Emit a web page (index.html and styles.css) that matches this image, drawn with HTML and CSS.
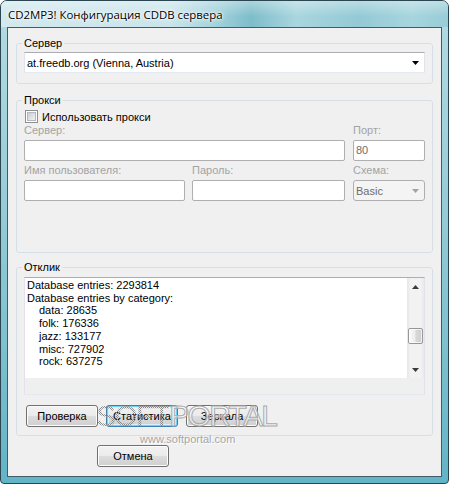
FILE: index.html
```html
<!DOCTYPE html>
<html lang="ru">
<head>
<meta charset="utf-8">
<title>CD2MP3! Конфигурация CDDB сервера</title>
<link rel="stylesheet" href="styles.css">
</head>
<body>
<div class="window">
  <div class="titlebar"><span class="title">CD2MP3! Конфигурация CDDB сервера</span></div>
  <div class="client">
    <fieldset class="group g-server">
      <legend>Сервер</legend>
      <div class="gbody">
        <div class="combo">
          <span class="combo-text">at.freedb.org (Vienna, Austria)</span>
          <svg class="arrow" width="7" height="4" viewBox="0 0 7 4"><polygon points="0,0 7,0 3.5,4" fill="#000"/></svg>
        </div>
      </div>
    </fieldset>

    <fieldset class="group g-proxy">
      <legend>Прокси</legend>
      <div class="gbody">
        <label class="check"><span class="box"></span><span>Использовать прокси</span></label>
        <div class="proxy-grid">
          <div class="lbl span2">Сервер:</div>
          <div class="lbl col3">Порт:</div>
          <div class="edit span2"></div>
          <div class="edit col3">80</div>
          <div class="lbl">Имя пользователя:</div>
          <div class="lbl">Пароль:</div>
          <div class="lbl col3">Схема:</div>
          <div class="edit"></div>
          <div class="edit"></div>
          <div class="combo dis col3">
            <span class="combo-text">Basic</span>
            <svg class="arrow" width="7" height="4" viewBox="0 0 7 4"><polygon points="0,0 7,0 3.5,4" fill="#a3a3a3"/></svg>
          </div>
        </div>
      </div>
    </fieldset>

    <fieldset class="group g-resp">
      <legend>Отклик</legend>
      <div class="gbody">
        <div class="memo">
          <div class="memo-main">
            <div class="memo-text">
              <div>Database entries: 2293814</div>
              <div>Database entries by category:</div>
              <div class="ind">data: 28635</div>
              <div class="ind">folk: 176336</div>
              <div class="ind">jazz: 133177</div>
              <div class="ind">misc: 727902</div>
              <div class="ind">rock: 637275</div>
            </div>
            <div class="vscroll">
              <div class="sarrow"><svg width="7" height="4" viewBox="0 0 7 4"><polygon points="3.5,0 7,4 0,4" fill="#3a3a3a"/></svg></div>
              <div class="track"><div class="thumb"></div></div>
              <div class="sarrow"><svg width="7" height="4" viewBox="0 0 7 4"><polygon points="0,0 7,0 3.5,4" fill="#3a3a3a"/></svg></div>
            </div>
          </div>
          <div class="hscroll"></div>
        </div>
        <div class="btnrow">
          <button class="btn">Проверка</button>
          <button class="btn focus">Статистика</button>
          <button class="btn">Зеркала</button>
        </div>
      </div>
    </fieldset>

    <div class="bottom">
      <button class="btn">Отмена</button>
    </div>

    <div class="wm"><span class="wm-soft">SOFT</span><span class="wm-portal">PORTAL</span></div>
    <div class="wm-url">www.softportal.com</div>
  </div>
</div>
</body>
</html>
```

FILE: styles.css
```css
html, body {
  margin: 0;
  padding: 0;
}

body {
  background: #ffffff;
  font-family: "Liberation Sans", Arial, sans-serif;
  font-size: 11px;
  color: #000;
}

.window {
  width: 449px;
  height: 484px;
  box-sizing: border-box;
  border: 1px solid #2b4650;
  border-radius: 7px 7px 4px 4px;
  padding: 0 6px 6px;
  display: flex;
  flex-direction: column;
  overflow: hidden;
  background: linear-gradient(180deg, #b4dbe3 0%, #9ccfd9 35%, #7fc1cf 70%, #62b4c6 100%);
}

.titlebar {
  height: 26px;
  margin: 0 -6px;
  padding-left: 7px;
  display: flex;
  align-items: center;
  background:
    linear-gradient(180deg, rgba(255,255,255,0.35) 0%, rgba(255,255,255,0) 60%),
    linear-gradient(90deg, #d2e9ee 0%, #c9e5eb 38%, #a3d2dc 48%, #7dbdca 56%, #a9d6df 66%, #93cad5 80%, #a7d5de 92%, #98ccd7 100%);
}

.title {
  font-family: "Open Sans", "Noto Sans", sans-serif;
  font-size: 11.4px;
  color: #000;
  text-shadow: 0 0 6px #fff, 0 0 3px #fff, 0 0 2px #fff;
}

.client {
  flex: 1;
  position: relative;
  background: #f0f0f0;
  border: 1px solid #415c66;
  padding: 9px 8px 0;
}

.group {
  margin: 0;
  padding: 0;
  min-width: 0;
  border: 1px solid #d5dfe5;
  border-radius: 3px;
}

.group legend {
  margin-left: 5px;
  padding: 0 2px;
  line-height: 13px;
  font-size: 11px;
}

.gbody {
  padding: 0 7px 10px;
}

.g-server .combo {
  margin-top: 2px;
}

.g-proxy {
  margin-top: 10px;
}

.g-proxy .gbody {
  padding-bottom: 51px;
}

.g-resp {
  margin-top: 8px;
}

.g-resp .gbody {
  padding-bottom: 8px;
}

.combo {
  height: 21px;
  box-sizing: border-box;
  border: 1px solid;
  border-color: #abadb3 #e2e3ea #e3e9ef #e2e3ea;
  background: #fff;
  display: flex;
  align-items: center;
  padding: 0 5px 0 2px;
}

.combo-text {
  flex: 1;
  white-space: nowrap;
}

.arrow {
  display: block;
}

.combo.dis {
  border: 1px solid #afafaf;
  border-radius: 3px;
  background: #f4f4f4;
  color: #6d6d6d;
}

.check {
  margin-top: 3px;
  height: 13px;
  display: flex;
  align-items: center;
  gap: 4px;
  padding-left: 1px;
}

.box {
  width: 13px;
  height: 13px;
  box-sizing: border-box;
  border: 1px solid #8e8f8f;
  background: #fff;
  box-shadow: inset 0 0 0 1px #fff, inset 0 0 0 2px #b4b8bd;
  position: relative;
}

.box::after {
  content: "";
  position: absolute;
  left: 2px;
  top: 2px;
  width: 7px;
  height: 7px;
  background: linear-gradient(135deg, #c9cdd3 0%, #e2e4e7 60%, #f3f3f3 100%);
}

.proxy-grid {
  margin-top: 1px;
  display: grid;
  grid-template-columns: 161px 153px 73px;
  grid-template-rows: 13px 21px 13px 21px;
  column-gap: 7px;
  row-gap: 3px;
}

.proxy-grid > .col3 {
  grid-column: 3;
  margin-left: 1px;
}

.proxy-grid > .span2 {
  grid-column: 1 / span 2;
}

.lbl {
  line-height: 13px;
  color: #a3a3a3;
  white-space: nowrap;
}

.edit {
  height: 21px;
  box-sizing: border-box;
  border: 1px solid #afafaf;
  border-radius: 2px;
  background: #fff;
  color: #6d6d6d;
  padding-left: 2px;
  line-height: 19px;
}

.memo {
  margin-top: 3px;
  height: 118px;
  box-sizing: border-box;
  border: 1px solid;
  border-color: #abadb3 #e2e3ea #e3e9ef #e2e3ea;
  background: #fff;
  display: flex;
  flex-direction: column;
}

.memo-main {
  flex: 1;
  display: flex;
  min-height: 0;
}

.memo-text {
  flex: 1;
  padding: 1px 2px 0;
  line-height: 12.7px;
  white-space: nowrap;
  overflow: hidden;
}

.memo-text .ind {
  padding-left: 12px;
}

.vscroll {
  width: 17px;
  display: flex;
  flex-direction: column;
  background: linear-gradient(90deg, #e6e6e6 0%, #f2f2f2 20%, #f2f2f2 80%, #e9e9e9 100%);
}

.sarrow {
  height: 17px;
  display: flex;
  align-items: center;
  justify-content: center;
}

.track {
  flex: 1;
}

.thumb {
  margin: 33px auto 0;
  width: 15px;
  height: 16px;
  box-sizing: border-box;
  border: 1px solid #979797;
  border-radius: 2px;
  background: linear-gradient(90deg, #fcfcfc 0%, #ececec 45%, #d8d8d8 55%, #cfcfcf 100%);
  box-shadow: inset 0 0 0 1px rgba(255,255,255,0.7);
}

.hscroll {
  height: 16px;
  background: #efefef;
}

.btnrow {
  margin-top: 10px;
  padding-left: 2px;
  display: flex;
  gap: 8px;
}

.btn {
  width: 72px;
  height: 22px;
  box-sizing: border-box;
  margin: 0;
  padding: 0;
  border: 1px solid #707070;
  border-radius: 3px;
  background: linear-gradient(180deg, #f2f2f2 0%, #ebebeb 50%, #dddddd 50%, #cfcfcf 100%);
  box-shadow: inset 0 0 0 1px #fcfcfc;
  font-family: "Liberation Sans", Arial, sans-serif;
  font-size: 11px;
  color: #000;
  text-align: center;
}

.btn.focus {
  border-color: #3c7fb1;
  box-shadow: inset 0 0 0 1px #6fd3f7, inset 0 0 0 2px #d6f1fb;
}

.bottom {
  margin-top: 9px;
  padding-left: 81px;
}

.wm {
  position: absolute;
  left: 88px;
  top: 373px;
  font-family: "Liberation Sans", Arial, sans-serif;
  font-size: 30px;
  line-height: 30px;
  letter-spacing: -1.7px;
  white-space: nowrap;
  pointer-events: none;
}

.wm-soft {
  color: transparent;
  background: repeating-conic-gradient(#8a8a8a 0 25%, transparent 0 50%) 0 0 / 2px 2px;
  -webkit-background-clip: text;
  background-clip: text;
}

.wm-portal {
  color: rgba(255, 255, 255, 0.5);
  -webkit-text-stroke: 1px #aaaaaa;
}

.wm-url {
  position: absolute;
  left: 132px;
  top: 405px;
  font-family: "Liberation Sans", Arial, sans-serif;
  font-size: 11px;
  line-height: 13px;
  color: #a6a6a6;
  text-shadow: 1px 1px 0 #fff;
  white-space: nowrap;
  pointer-events: none;
}
```
